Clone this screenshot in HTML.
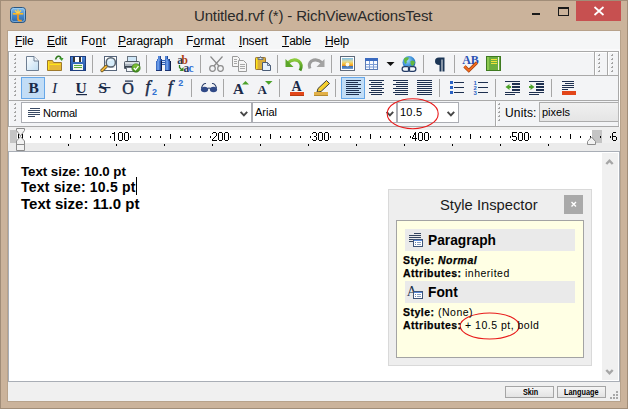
<!DOCTYPE html><html><head><meta charset="utf-8"><style>
*{margin:0;padding:0;box-sizing:border-box}
html,body{width:628px;height:409px;overflow:hidden}
body{position:relative;background:#CBB39B;font-family:"Liberation Sans",sans-serif;color:#000}
.a{position:absolute}
.t{position:absolute;white-space:pre;line-height:1}
svg.full{position:absolute;left:0;top:0}
.menu{position:absolute;font-size:12px;letter-spacing:-0.2px;color:#000;white-space:pre;line-height:1}
.menu u{text-decoration:none;position:relative}
.ib{-webkit-text-stroke:0.25px #000}
.menu u:after{content:"";position:absolute;left:0;right:0;bottom:1px;height:1px;background:#000}
</style></head><body>
<svg class="full" width="628" height="409" shape-rendering="crispEdges"><rect x="0" y="0" width="628" height="1" fill="#A18D78" /><rect x="0" y="0" width="1" height="409" fill="#A18D78" /><rect x="627" y="0" width="1" height="409" fill="#A18D78" /><rect x="0" y="408" width="628" height="1" fill="#A18D78" /><rect x="7" y="30" width="614" height="1" fill="#B7A28B" /><rect x="7" y="30" width="1" height="372" fill="#B7A28B" /><rect x="620" y="30" width="1" height="372" fill="#B7A28B" /><rect x="7" y="401" width="614" height="1" fill="#B7A28B" /><rect x="8" y="31" width="612" height="370" fill="#F0F0F0" /><rect x="8" y="31" width="612" height="20" fill="#F5F6F7" /><rect x="8" y="49" width="612" height="2" fill="#FAFAFB" /><rect x="8" y="51" width="611" height="75" fill="#F3F4F6" /><rect x="8" y="51" width="611" height="1" fill="#A9A9A9" /><rect x="8" y="52" width="611" height="1" fill="#FFFFFF" /><rect x="8" y="51" width="1" height="76" fill="#A9A9A9" /><rect x="9" y="52" width="1" height="74" fill="#FFFFFF" /><rect x="618" y="51" width="1" height="76" fill="#A9A9A9" /><rect x="619" y="51" width="1" height="76" fill="#FFFFFF" /><rect x="9" y="75" width="609" height="1" fill="#A9A9A9" /><rect x="9" y="100" width="609" height="1" fill="#A9A9A9" /><rect x="9" y="126" width="609" height="1" fill="#A9A9A9" /><rect x="594" y="51" width="1" height="25" fill="#A9A9A9" /><rect x="607" y="51" width="1" height="25" fill="#A9A9A9" /><rect x="595" y="52" width="1" height="23" fill="#FFFFFF" /><rect x="608" y="52" width="1" height="23" fill="#FFFFFF" /><rect x="495" y="100" width="1" height="26" fill="#A9A9A9" /><rect x="496" y="101" width="1" height="25" fill="#FFFFFF" /><rect x="8" y="127" width="612" height="24" fill="#EFEFEF" /><rect x="17" y="130" width="575" height="13" fill="#FFFFFF" /><rect x="8" y="143" width="612" height="8" fill="#EBEBEB" /><rect x="10" y="130" width="7" height="13" fill="#C4C4C4" /><rect x="592" y="130" width="10" height="13" fill="#C4C4C4" /><rect x="8" y="151" width="612" height="1" fill="#A9AEB6" /><rect x="8" y="152" width="612" height="229" fill="#FFFFFF" /><rect x="8" y="151" width="1" height="231" fill="#A9AEB6" /><rect x="619" y="151" width="1" height="231" fill="#A9AEB6" /><rect x="8" y="381" width="612" height="1" fill="#A9AEB6" /><rect x="602" y="153" width="16" height="227" fill="#F0F0F0" /><rect x="8" y="382" width="612" height="19" fill="#F0F0F0" /><rect x="21" y="102" width="231" height="21" fill="#ABADB3" /><rect x="22" y="103" width="229" height="19" fill="#FFFFFF" /><rect x="252" y="102" width="145" height="21" fill="#ABADB3" /><rect x="253" y="103" width="143" height="19" fill="#FFFFFF" /><rect x="397" y="102" width="62" height="21" fill="#ABADB3" /><rect x="398" y="103" width="60" height="19" fill="#FFFFFF" /><rect x="539" y="102" width="80" height="20" fill="#ACACAC" /><defs><linearGradient id="cg" x1="0" y1="0" x2="0" y2="1"><stop offset="0" stop-color="#F0F0F0"/><stop offset="1" stop-color="#E5E5E5"/></linearGradient><linearGradient id="bg" x1="0" y1="0" x2="0" y2="1"><stop offset="0" stop-color="#F5F5F5"/><stop offset="1" stop-color="#E3E3E3"/></linearGradient></defs><rect x="540" y="103" width="78" height="18" fill="url(#cg)" /><rect x="618" y="101" width="1" height="25" fill="#B8B8B8" /><rect x="21" y="77" width="24" height="22" fill="#66A7E8" /><rect x="22" y="78" width="22" height="20" fill="#C2DDF6" /><rect x="341" y="77" width="24" height="22" fill="#66A7E8" /><rect x="342" y="78" width="22" height="20" fill="#C2DDF6" /><rect x="388" y="189" width="204" height="177" fill="#D9D9D9" /><rect x="389" y="190" width="202" height="175" fill="#EEEEEE" /><rect x="564" y="195" width="19" height="19" fill="#A9A9A9" /><rect x="396" y="220" width="188" height="138" fill="#A3A3A3" /><rect x="397" y="221" width="186" height="136" fill="#FFFFE4" /><rect x="405" y="229" width="170" height="22" fill="#EAEAEA" /><rect x="405" y="281" width="170" height="22" fill="#EAEAEA" /><rect x="505" y="386" width="49" height="12" fill="#A5A5A5" /><rect x="506" y="387" width="47" height="10" fill="url(#bg)" /><rect x="557" y="386" width="49" height="12" fill="#A5A5A5" /><rect x="558" y="387" width="47" height="10" fill="url(#bg)" /><rect x="616" y="391" width="2" height="2" fill="#A8A8A8" /><rect x="613" y="394" width="2" height="2" fill="#A8A8A8" /><rect x="616" y="394" width="2" height="2" fill="#A8A8A8" /><rect x="610" y="397" width="2" height="2" fill="#A8A8A8" /><rect x="613" y="397" width="2" height="2" fill="#A8A8A8" /><rect x="616" y="397" width="2" height="2" fill="#A8A8A8" /><rect x="30" y="136" width="1" height="2" fill="#000" /><rect x="40" y="136" width="1" height="2" fill="#000" /><rect x="50" y="136" width="1" height="2" fill="#000" /><rect x="60" y="136" width="1" height="2" fill="#000" /><rect x="70" y="134" width="1" height="5" fill="#000" /><rect x="80" y="136" width="1" height="2" fill="#000" /><rect x="90" y="136" width="1" height="2" fill="#000" /><rect x="100" y="136" width="1" height="2" fill="#000" /><rect x="110" y="136" width="1" height="2" fill="#000" /><rect x="130" y="136" width="1" height="2" fill="#000" /><rect x="140" y="136" width="1" height="2" fill="#000" /><rect x="150" y="136" width="1" height="2" fill="#000" /><rect x="160" y="136" width="1" height="2" fill="#000" /><rect x="170" y="134" width="1" height="5" fill="#000" /><rect x="180" y="136" width="1" height="2" fill="#000" /><rect x="190" y="136" width="1" height="2" fill="#000" /><rect x="200" y="136" width="1" height="2" fill="#000" /><rect x="210" y="136" width="1" height="2" fill="#000" /><rect x="230" y="136" width="1" height="2" fill="#000" /><rect x="240" y="136" width="1" height="2" fill="#000" /><rect x="250" y="136" width="1" height="2" fill="#000" /><rect x="260" y="136" width="1" height="2" fill="#000" /><rect x="270" y="134" width="1" height="5" fill="#000" /><rect x="280" y="136" width="1" height="2" fill="#000" /><rect x="290" y="136" width="1" height="2" fill="#000" /><rect x="300" y="136" width="1" height="2" fill="#000" /><rect x="310" y="136" width="1" height="2" fill="#000" /><rect x="330" y="136" width="1" height="2" fill="#000" /><rect x="340" y="136" width="1" height="2" fill="#000" /><rect x="350" y="136" width="1" height="2" fill="#000" /><rect x="360" y="136" width="1" height="2" fill="#000" /><rect x="370" y="134" width="1" height="5" fill="#000" /><rect x="380" y="136" width="1" height="2" fill="#000" /><rect x="390" y="136" width="1" height="2" fill="#000" /><rect x="400" y="136" width="1" height="2" fill="#000" /><rect x="410" y="136" width="1" height="2" fill="#000" /><rect x="430" y="136" width="1" height="2" fill="#000" /><rect x="440" y="136" width="1" height="2" fill="#000" /><rect x="450" y="136" width="1" height="2" fill="#000" /><rect x="460" y="136" width="1" height="2" fill="#000" /><rect x="470" y="134" width="1" height="5" fill="#000" /><rect x="480" y="136" width="1" height="2" fill="#000" /><rect x="490" y="136" width="1" height="2" fill="#000" /><rect x="500" y="136" width="1" height="2" fill="#000" /><rect x="510" y="136" width="1" height="2" fill="#000" /><rect x="530" y="136" width="1" height="2" fill="#000" /><rect x="540" y="136" width="1" height="2" fill="#000" /><rect x="550" y="136" width="1" height="2" fill="#000" /><rect x="560" y="136" width="1" height="2" fill="#000" /><rect x="570" y="134" width="1" height="5" fill="#000" /><rect x="580" y="136" width="1" height="2" fill="#000" /><rect x="590" y="136" width="1" height="2" fill="#000" /><rect x="600" y="136" width="1" height="2" fill="#000" /><rect x="610" y="136" width="1" height="2" fill="#000" /><rect x="18" y="134" width="1" height="5" fill="#000" /><rect x="22" y="134" width="1" height="5" fill="#000" /><rect x="114" y="132" width="1" height="1" fill="#000" /><rect x="112" y="133" width="1" height="1" fill="#000" /><rect x="113" y="133" width="1" height="1" fill="#000" /><rect x="114" y="133" width="1" height="1" fill="#000" /><rect x="114" y="134" width="1" height="1" fill="#000" /><rect x="114" y="135" width="1" height="1" fill="#000" /><rect x="114" y="136" width="1" height="1" fill="#000" /><rect x="114" y="137" width="1" height="1" fill="#000" /><rect x="114" y="138" width="1" height="1" fill="#000" /><rect x="114" y="139" width="1" height="1" fill="#000" /><rect x="114" y="140" width="1" height="1" fill="#000" /><rect x="119" y="132" width="1" height="1" fill="#000" /><rect x="120" y="132" width="1" height="1" fill="#000" /><rect x="121" y="132" width="1" height="1" fill="#000" /><rect x="118" y="133" width="1" height="1" fill="#000" /><rect x="122" y="133" width="1" height="1" fill="#000" /><rect x="118" y="134" width="1" height="1" fill="#000" /><rect x="122" y="134" width="1" height="1" fill="#000" /><rect x="118" y="135" width="1" height="1" fill="#000" /><rect x="122" y="135" width="1" height="1" fill="#000" /><rect x="118" y="136" width="1" height="1" fill="#000" /><rect x="122" y="136" width="1" height="1" fill="#000" /><rect x="118" y="137" width="1" height="1" fill="#000" /><rect x="122" y="137" width="1" height="1" fill="#000" /><rect x="118" y="138" width="1" height="1" fill="#000" /><rect x="122" y="138" width="1" height="1" fill="#000" /><rect x="118" y="139" width="1" height="1" fill="#000" /><rect x="122" y="139" width="1" height="1" fill="#000" /><rect x="119" y="140" width="1" height="1" fill="#000" /><rect x="120" y="140" width="1" height="1" fill="#000" /><rect x="121" y="140" width="1" height="1" fill="#000" /><rect x="125" y="132" width="1" height="1" fill="#000" /><rect x="126" y="132" width="1" height="1" fill="#000" /><rect x="127" y="132" width="1" height="1" fill="#000" /><rect x="124" y="133" width="1" height="1" fill="#000" /><rect x="128" y="133" width="1" height="1" fill="#000" /><rect x="124" y="134" width="1" height="1" fill="#000" /><rect x="128" y="134" width="1" height="1" fill="#000" /><rect x="124" y="135" width="1" height="1" fill="#000" /><rect x="128" y="135" width="1" height="1" fill="#000" /><rect x="124" y="136" width="1" height="1" fill="#000" /><rect x="128" y="136" width="1" height="1" fill="#000" /><rect x="124" y="137" width="1" height="1" fill="#000" /><rect x="128" y="137" width="1" height="1" fill="#000" /><rect x="124" y="138" width="1" height="1" fill="#000" /><rect x="128" y="138" width="1" height="1" fill="#000" /><rect x="124" y="139" width="1" height="1" fill="#000" /><rect x="128" y="139" width="1" height="1" fill="#000" /><rect x="125" y="140" width="1" height="1" fill="#000" /><rect x="126" y="140" width="1" height="1" fill="#000" /><rect x="127" y="140" width="1" height="1" fill="#000" /><rect x="213" y="132" width="1" height="1" fill="#000" /><rect x="214" y="132" width="1" height="1" fill="#000" /><rect x="215" y="132" width="1" height="1" fill="#000" /><rect x="212" y="133" width="1" height="1" fill="#000" /><rect x="216" y="133" width="1" height="1" fill="#000" /><rect x="216" y="134" width="1" height="1" fill="#000" /><rect x="216" y="135" width="1" height="1" fill="#000" /><rect x="215" y="136" width="1" height="1" fill="#000" /><rect x="214" y="137" width="1" height="1" fill="#000" /><rect x="213" y="138" width="1" height="1" fill="#000" /><rect x="212" y="139" width="1" height="1" fill="#000" /><rect x="212" y="140" width="1" height="1" fill="#000" /><rect x="213" y="140" width="1" height="1" fill="#000" /><rect x="214" y="140" width="1" height="1" fill="#000" /><rect x="215" y="140" width="1" height="1" fill="#000" /><rect x="216" y="140" width="1" height="1" fill="#000" /><rect x="219" y="132" width="1" height="1" fill="#000" /><rect x="220" y="132" width="1" height="1" fill="#000" /><rect x="221" y="132" width="1" height="1" fill="#000" /><rect x="218" y="133" width="1" height="1" fill="#000" /><rect x="222" y="133" width="1" height="1" fill="#000" /><rect x="218" y="134" width="1" height="1" fill="#000" /><rect x="222" y="134" width="1" height="1" fill="#000" /><rect x="218" y="135" width="1" height="1" fill="#000" /><rect x="222" y="135" width="1" height="1" fill="#000" /><rect x="218" y="136" width="1" height="1" fill="#000" /><rect x="222" y="136" width="1" height="1" fill="#000" /><rect x="218" y="137" width="1" height="1" fill="#000" /><rect x="222" y="137" width="1" height="1" fill="#000" /><rect x="218" y="138" width="1" height="1" fill="#000" /><rect x="222" y="138" width="1" height="1" fill="#000" /><rect x="218" y="139" width="1" height="1" fill="#000" /><rect x="222" y="139" width="1" height="1" fill="#000" /><rect x="219" y="140" width="1" height="1" fill="#000" /><rect x="220" y="140" width="1" height="1" fill="#000" /><rect x="221" y="140" width="1" height="1" fill="#000" /><rect x="225" y="132" width="1" height="1" fill="#000" /><rect x="226" y="132" width="1" height="1" fill="#000" /><rect x="227" y="132" width="1" height="1" fill="#000" /><rect x="224" y="133" width="1" height="1" fill="#000" /><rect x="228" y="133" width="1" height="1" fill="#000" /><rect x="224" y="134" width="1" height="1" fill="#000" /><rect x="228" y="134" width="1" height="1" fill="#000" /><rect x="224" y="135" width="1" height="1" fill="#000" /><rect x="228" y="135" width="1" height="1" fill="#000" /><rect x="224" y="136" width="1" height="1" fill="#000" /><rect x="228" y="136" width="1" height="1" fill="#000" /><rect x="224" y="137" width="1" height="1" fill="#000" /><rect x="228" y="137" width="1" height="1" fill="#000" /><rect x="224" y="138" width="1" height="1" fill="#000" /><rect x="228" y="138" width="1" height="1" fill="#000" /><rect x="224" y="139" width="1" height="1" fill="#000" /><rect x="228" y="139" width="1" height="1" fill="#000" /><rect x="225" y="140" width="1" height="1" fill="#000" /><rect x="226" y="140" width="1" height="1" fill="#000" /><rect x="227" y="140" width="1" height="1" fill="#000" /><rect x="313" y="132" width="1" height="1" fill="#000" /><rect x="314" y="132" width="1" height="1" fill="#000" /><rect x="315" y="132" width="1" height="1" fill="#000" /><rect x="312" y="133" width="1" height="1" fill="#000" /><rect x="316" y="133" width="1" height="1" fill="#000" /><rect x="316" y="134" width="1" height="1" fill="#000" /><rect x="316" y="135" width="1" height="1" fill="#000" /><rect x="314" y="136" width="1" height="1" fill="#000" /><rect x="315" y="136" width="1" height="1" fill="#000" /><rect x="316" y="137" width="1" height="1" fill="#000" /><rect x="316" y="138" width="1" height="1" fill="#000" /><rect x="312" y="139" width="1" height="1" fill="#000" /><rect x="316" y="139" width="1" height="1" fill="#000" /><rect x="313" y="140" width="1" height="1" fill="#000" /><rect x="314" y="140" width="1" height="1" fill="#000" /><rect x="315" y="140" width="1" height="1" fill="#000" /><rect x="319" y="132" width="1" height="1" fill="#000" /><rect x="320" y="132" width="1" height="1" fill="#000" /><rect x="321" y="132" width="1" height="1" fill="#000" /><rect x="318" y="133" width="1" height="1" fill="#000" /><rect x="322" y="133" width="1" height="1" fill="#000" /><rect x="318" y="134" width="1" height="1" fill="#000" /><rect x="322" y="134" width="1" height="1" fill="#000" /><rect x="318" y="135" width="1" height="1" fill="#000" /><rect x="322" y="135" width="1" height="1" fill="#000" /><rect x="318" y="136" width="1" height="1" fill="#000" /><rect x="322" y="136" width="1" height="1" fill="#000" /><rect x="318" y="137" width="1" height="1" fill="#000" /><rect x="322" y="137" width="1" height="1" fill="#000" /><rect x="318" y="138" width="1" height="1" fill="#000" /><rect x="322" y="138" width="1" height="1" fill="#000" /><rect x="318" y="139" width="1" height="1" fill="#000" /><rect x="322" y="139" width="1" height="1" fill="#000" /><rect x="319" y="140" width="1" height="1" fill="#000" /><rect x="320" y="140" width="1" height="1" fill="#000" /><rect x="321" y="140" width="1" height="1" fill="#000" /><rect x="325" y="132" width="1" height="1" fill="#000" /><rect x="326" y="132" width="1" height="1" fill="#000" /><rect x="327" y="132" width="1" height="1" fill="#000" /><rect x="324" y="133" width="1" height="1" fill="#000" /><rect x="328" y="133" width="1" height="1" fill="#000" /><rect x="324" y="134" width="1" height="1" fill="#000" /><rect x="328" y="134" width="1" height="1" fill="#000" /><rect x="324" y="135" width="1" height="1" fill="#000" /><rect x="328" y="135" width="1" height="1" fill="#000" /><rect x="324" y="136" width="1" height="1" fill="#000" /><rect x="328" y="136" width="1" height="1" fill="#000" /><rect x="324" y="137" width="1" height="1" fill="#000" /><rect x="328" y="137" width="1" height="1" fill="#000" /><rect x="324" y="138" width="1" height="1" fill="#000" /><rect x="328" y="138" width="1" height="1" fill="#000" /><rect x="324" y="139" width="1" height="1" fill="#000" /><rect x="328" y="139" width="1" height="1" fill="#000" /><rect x="325" y="140" width="1" height="1" fill="#000" /><rect x="326" y="140" width="1" height="1" fill="#000" /><rect x="327" y="140" width="1" height="1" fill="#000" /><rect x="415" y="132" width="1" height="1" fill="#000" /><rect x="414" y="133" width="1" height="1" fill="#000" /><rect x="415" y="133" width="1" height="1" fill="#000" /><rect x="414" y="134" width="1" height="1" fill="#000" /><rect x="415" y="134" width="1" height="1" fill="#000" /><rect x="413" y="135" width="1" height="1" fill="#000" /><rect x="415" y="135" width="1" height="1" fill="#000" /><rect x="413" y="136" width="1" height="1" fill="#000" /><rect x="415" y="136" width="1" height="1" fill="#000" /><rect x="412" y="137" width="1" height="1" fill="#000" /><rect x="415" y="137" width="1" height="1" fill="#000" /><rect x="412" y="138" width="1" height="1" fill="#000" /><rect x="413" y="138" width="1" height="1" fill="#000" /><rect x="414" y="138" width="1" height="1" fill="#000" /><rect x="415" y="138" width="1" height="1" fill="#000" /><rect x="416" y="138" width="1" height="1" fill="#000" /><rect x="415" y="139" width="1" height="1" fill="#000" /><rect x="415" y="140" width="1" height="1" fill="#000" /><rect x="419" y="132" width="1" height="1" fill="#000" /><rect x="420" y="132" width="1" height="1" fill="#000" /><rect x="421" y="132" width="1" height="1" fill="#000" /><rect x="418" y="133" width="1" height="1" fill="#000" /><rect x="422" y="133" width="1" height="1" fill="#000" /><rect x="418" y="134" width="1" height="1" fill="#000" /><rect x="422" y="134" width="1" height="1" fill="#000" /><rect x="418" y="135" width="1" height="1" fill="#000" /><rect x="422" y="135" width="1" height="1" fill="#000" /><rect x="418" y="136" width="1" height="1" fill="#000" /><rect x="422" y="136" width="1" height="1" fill="#000" /><rect x="418" y="137" width="1" height="1" fill="#000" /><rect x="422" y="137" width="1" height="1" fill="#000" /><rect x="418" y="138" width="1" height="1" fill="#000" /><rect x="422" y="138" width="1" height="1" fill="#000" /><rect x="418" y="139" width="1" height="1" fill="#000" /><rect x="422" y="139" width="1" height="1" fill="#000" /><rect x="419" y="140" width="1" height="1" fill="#000" /><rect x="420" y="140" width="1" height="1" fill="#000" /><rect x="421" y="140" width="1" height="1" fill="#000" /><rect x="425" y="132" width="1" height="1" fill="#000" /><rect x="426" y="132" width="1" height="1" fill="#000" /><rect x="427" y="132" width="1" height="1" fill="#000" /><rect x="424" y="133" width="1" height="1" fill="#000" /><rect x="428" y="133" width="1" height="1" fill="#000" /><rect x="424" y="134" width="1" height="1" fill="#000" /><rect x="428" y="134" width="1" height="1" fill="#000" /><rect x="424" y="135" width="1" height="1" fill="#000" /><rect x="428" y="135" width="1" height="1" fill="#000" /><rect x="424" y="136" width="1" height="1" fill="#000" /><rect x="428" y="136" width="1" height="1" fill="#000" /><rect x="424" y="137" width="1" height="1" fill="#000" /><rect x="428" y="137" width="1" height="1" fill="#000" /><rect x="424" y="138" width="1" height="1" fill="#000" /><rect x="428" y="138" width="1" height="1" fill="#000" /><rect x="424" y="139" width="1" height="1" fill="#000" /><rect x="428" y="139" width="1" height="1" fill="#000" /><rect x="425" y="140" width="1" height="1" fill="#000" /><rect x="426" y="140" width="1" height="1" fill="#000" /><rect x="427" y="140" width="1" height="1" fill="#000" /><rect x="512" y="132" width="1" height="1" fill="#000" /><rect x="513" y="132" width="1" height="1" fill="#000" /><rect x="514" y="132" width="1" height="1" fill="#000" /><rect x="515" y="132" width="1" height="1" fill="#000" /><rect x="516" y="132" width="1" height="1" fill="#000" /><rect x="512" y="133" width="1" height="1" fill="#000" /><rect x="512" y="134" width="1" height="1" fill="#000" /><rect x="512" y="135" width="1" height="1" fill="#000" /><rect x="512" y="136" width="1" height="1" fill="#000" /><rect x="513" y="136" width="1" height="1" fill="#000" /><rect x="514" y="136" width="1" height="1" fill="#000" /><rect x="515" y="136" width="1" height="1" fill="#000" /><rect x="516" y="137" width="1" height="1" fill="#000" /><rect x="516" y="138" width="1" height="1" fill="#000" /><rect x="512" y="139" width="1" height="1" fill="#000" /><rect x="516" y="139" width="1" height="1" fill="#000" /><rect x="513" y="140" width="1" height="1" fill="#000" /><rect x="514" y="140" width="1" height="1" fill="#000" /><rect x="515" y="140" width="1" height="1" fill="#000" /><rect x="519" y="132" width="1" height="1" fill="#000" /><rect x="520" y="132" width="1" height="1" fill="#000" /><rect x="521" y="132" width="1" height="1" fill="#000" /><rect x="518" y="133" width="1" height="1" fill="#000" /><rect x="522" y="133" width="1" height="1" fill="#000" /><rect x="518" y="134" width="1" height="1" fill="#000" /><rect x="522" y="134" width="1" height="1" fill="#000" /><rect x="518" y="135" width="1" height="1" fill="#000" /><rect x="522" y="135" width="1" height="1" fill="#000" /><rect x="518" y="136" width="1" height="1" fill="#000" /><rect x="522" y="136" width="1" height="1" fill="#000" /><rect x="518" y="137" width="1" height="1" fill="#000" /><rect x="522" y="137" width="1" height="1" fill="#000" /><rect x="518" y="138" width="1" height="1" fill="#000" /><rect x="522" y="138" width="1" height="1" fill="#000" /><rect x="518" y="139" width="1" height="1" fill="#000" /><rect x="522" y="139" width="1" height="1" fill="#000" /><rect x="519" y="140" width="1" height="1" fill="#000" /><rect x="520" y="140" width="1" height="1" fill="#000" /><rect x="521" y="140" width="1" height="1" fill="#000" /><rect x="525" y="132" width="1" height="1" fill="#000" /><rect x="526" y="132" width="1" height="1" fill="#000" /><rect x="527" y="132" width="1" height="1" fill="#000" /><rect x="524" y="133" width="1" height="1" fill="#000" /><rect x="528" y="133" width="1" height="1" fill="#000" /><rect x="524" y="134" width="1" height="1" fill="#000" /><rect x="528" y="134" width="1" height="1" fill="#000" /><rect x="524" y="135" width="1" height="1" fill="#000" /><rect x="528" y="135" width="1" height="1" fill="#000" /><rect x="524" y="136" width="1" height="1" fill="#000" /><rect x="528" y="136" width="1" height="1" fill="#000" /><rect x="524" y="137" width="1" height="1" fill="#000" /><rect x="528" y="137" width="1" height="1" fill="#000" /><rect x="524" y="138" width="1" height="1" fill="#000" /><rect x="528" y="138" width="1" height="1" fill="#000" /><rect x="524" y="139" width="1" height="1" fill="#000" /><rect x="528" y="139" width="1" height="1" fill="#000" /><rect x="525" y="140" width="1" height="1" fill="#000" /><rect x="526" y="140" width="1" height="1" fill="#000" /><rect x="527" y="140" width="1" height="1" fill="#000" /><rect x="613" y="132" width="1" height="1" fill="#000" /><rect x="614" y="132" width="1" height="1" fill="#000" /><rect x="615" y="132" width="1" height="1" fill="#000" /><rect x="612" y="133" width="1" height="1" fill="#000" /><rect x="612" y="134" width="1" height="1" fill="#000" /><rect x="612" y="135" width="1" height="1" fill="#000" /><rect x="612" y="136" width="1" height="1" fill="#000" /><rect x="613" y="136" width="1" height="1" fill="#000" /><rect x="614" y="136" width="1" height="1" fill="#000" /><rect x="615" y="136" width="1" height="1" fill="#000" /><rect x="612" y="137" width="1" height="1" fill="#000" /><rect x="616" y="137" width="1" height="1" fill="#000" /><rect x="612" y="138" width="1" height="1" fill="#000" /><rect x="616" y="138" width="1" height="1" fill="#000" /><rect x="612" y="139" width="1" height="1" fill="#000" /><rect x="616" y="139" width="1" height="1" fill="#000" /><rect x="613" y="140" width="1" height="1" fill="#000" /><rect x="614" y="140" width="1" height="1" fill="#000" /><rect x="615" y="140" width="1" height="1" fill="#000" /><rect x="68" y="144" width="1" height="2" fill="#000" /><rect x="116" y="144" width="1" height="2" fill="#000" /><rect x="164" y="144" width="1" height="2" fill="#000" /><rect x="212" y="144" width="1" height="2" fill="#000" /><rect x="260" y="144" width="1" height="2" fill="#000" /><rect x="308" y="144" width="1" height="2" fill="#000" /><rect x="356" y="144" width="1" height="2" fill="#000" /><rect x="404" y="144" width="1" height="2" fill="#000" /><rect x="452" y="144" width="1" height="2" fill="#000" /><rect x="500" y="144" width="1" height="2" fill="#000" /><rect x="548" y="144" width="1" height="2" fill="#000" /></svg>
<svg class="full" width="628" height="409"><defs>
<linearGradient id="docg" x1="0" y1="0" x2="1" y2="1"><stop offset="0" stop-color="#FFFFFF"/><stop offset="1" stop-color="#BFDDF2"/></linearGradient>
<linearGradient id="blueg" x1="0" y1="0" x2="0" y2="1"><stop offset="0" stop-color="#4C86D6"/><stop offset="1" stop-color="#1D4C9E"/></linearGradient>
<linearGradient id="sunset" x1="0" y1="0" x2="0" y2="1"><stop offset="0" stop-color="#7EBEEA"/><stop offset="0.3" stop-color="#DCDCA0"/><stop offset="0.5" stop-color="#F8C848"/><stop offset="0.68" stop-color="#EC9A22"/><stop offset="0.76" stop-color="#3F6FB0"/><stop offset="1" stop-color="#6E9ED4"/></linearGradient>
<linearGradient id="greeng" x1="0" y1="0" x2="0" y2="1"><stop offset="0" stop-color="#8CCB3C"/><stop offset="1" stop-color="#3D8A1C"/></linearGradient>
<radialGradient id="globeg" cx="0.4" cy="0.35" r="0.7"><stop offset="0" stop-color="#9FD8F8"/><stop offset="0.6" stop-color="#3A8ED8"/><stop offset="1" stop-color="#1F5FA8"/></radialGradient>
</defs>
<!-- grips -->
<g fill="#A4A4A4" shape-rendering="crispEdges"><rect x="15" y="54" width="1" height="2"/><rect x="14" y="55" width="1" height="1"/><rect x="15" y="58" width="1" height="2"/><rect x="14" y="59" width="1" height="1"/><rect x="15" y="62" width="1" height="2"/><rect x="14" y="63" width="1" height="1"/><rect x="15" y="66" width="1" height="2"/><rect x="14" y="67" width="1" height="1"/><rect x="15" y="70" width="1" height="2"/><rect x="14" y="71" width="1" height="1"/><rect x="15" y="78" width="1" height="2"/><rect x="14" y="79" width="1" height="1"/><rect x="15" y="82" width="1" height="2"/><rect x="14" y="83" width="1" height="1"/><rect x="15" y="86" width="1" height="2"/><rect x="14" y="87" width="1" height="1"/><rect x="15" y="90" width="1" height="2"/><rect x="14" y="91" width="1" height="1"/><rect x="15" y="94" width="1" height="2"/><rect x="14" y="95" width="1" height="1"/><rect x="15" y="103" width="1" height="2"/><rect x="14" y="104" width="1" height="1"/><rect x="15" y="107" width="1" height="2"/><rect x="14" y="108" width="1" height="1"/><rect x="15" y="111" width="1" height="2"/><rect x="14" y="112" width="1" height="1"/><rect x="15" y="115" width="1" height="2"/><rect x="14" y="116" width="1" height="1"/><rect x="15" y="119" width="1" height="2"/><rect x="14" y="120" width="1" height="1"/><rect x="599" y="54" width="1" height="2"/><rect x="598" y="55" width="1" height="1"/><rect x="599" y="58" width="1" height="2"/><rect x="598" y="59" width="1" height="1"/><rect x="599" y="62" width="1" height="2"/><rect x="598" y="63" width="1" height="1"/><rect x="599" y="66" width="1" height="2"/><rect x="598" y="67" width="1" height="1"/><rect x="599" y="70" width="1" height="2"/><rect x="598" y="71" width="1" height="1"/><rect x="612" y="54" width="1" height="2"/><rect x="611" y="55" width="1" height="1"/><rect x="612" y="58" width="1" height="2"/><rect x="611" y="59" width="1" height="1"/><rect x="612" y="62" width="1" height="2"/><rect x="611" y="63" width="1" height="1"/><rect x="612" y="66" width="1" height="2"/><rect x="611" y="67" width="1" height="1"/><rect x="612" y="70" width="1" height="2"/><rect x="611" y="71" width="1" height="1"/><rect x="499" y="103" width="1" height="2"/><rect x="498" y="104" width="1" height="1"/><rect x="499" y="107" width="1" height="2"/><rect x="498" y="108" width="1" height="1"/><rect x="499" y="111" width="1" height="2"/><rect x="498" y="112" width="1" height="1"/><rect x="499" y="115" width="1" height="2"/><rect x="498" y="116" width="1" height="1"/><rect x="499" y="119" width="1" height="2"/><rect x="498" y="120" width="1" height="1"/></g>
<!-- separators -->
<g fill="#A6A6A6" shape-rendering="crispEdges">
<rect x="92" y="55" width="1" height="18"/><rect x="146" y="55" width="1" height="18"/><rect x="200" y="55" width="1" height="18"/><rect x="277" y="55" width="1" height="18"/><rect x="331" y="55" width="1" height="18"/><rect x="423" y="55" width="1" height="18"/><rect x="454" y="55" width="1" height="18"/>
<rect x="191" y="79" width="1" height="18"/><rect x="223" y="79" width="1" height="18"/><rect x="279" y="79" width="1" height="18"/><rect x="335" y="79" width="1" height="18"/><rect x="439" y="79" width="1" height="18"/><rect x="495" y="79" width="1" height="18"/><rect x="551" y="79" width="1" height="18"/>
</g>
<!-- new -->
<path d="M26.5 56.5H34L38.5 61V70.5H26.5Z" fill="url(#docg)" stroke="#6E7E92"/>
<path d="M34 56.5V61H38.5" fill="#F4F8FC" stroke="#6E7E92"/>
<!-- open -->
<path d="M47.5 60.5H52.5L53.5 62.5H61.5V70.5H47.5Z" fill="#EDC232" stroke="#9E7A2C"/>
<path d="M48.5 61.5V69.5M49.5 64.5H60.5" stroke="#FFE418" stroke-width="1"/>
<rect x="50" y="65" width="11" height="5" fill="#E6B838"/>
<path d="M55.5 59.5Q56.5 55.8 59 56.2Q60.5 56.5 61 58" stroke="#2F7A1E" stroke-width="1.5" fill="none"/>
<path d="M59 58H63.5L61.8 61Z" fill="#3E9B2E"/>
<!-- save -->
<rect x="70.5" y="56.5" width="15" height="14" fill="url(#blueg)" stroke="#1E3E7E"/>
<rect x="73" y="57" width="9" height="5" fill="#FFFFFF"/><rect x="73" y="57" width="2" height="5" fill="#333"/><rect x="79" y="57" width="2" height="5" fill="#333"/>
<rect x="73" y="64" width="10" height="6" fill="#F2F6EE"/><rect x="74" y="65" width="8" height="1" fill="#5AAA3A"/><rect x="74" y="67" width="8" height="1" fill="#5AAA3A"/>
<!-- preview -->
<rect x="104.5" y="56.5" width="12" height="14" fill="#FFFFFF" stroke="#56657A"/>
<path d="M106.5 59.5H114.5M106.5 67.5H114.5" stroke="#D0D8E0"/>
<circle cx="110.8" cy="62.4" r="4.6" fill="#D6ECFA" stroke="#5A6470" stroke-width="1.5"/>
<path d="M108.5 60.5Q110 59.5 111.5 60" stroke="#FFFFFF" stroke-width="1" fill="none"/>
<path d="M102 70.5L106 66.5" stroke="#5A4A20" stroke-width="3.2" stroke-linecap="round"/>
<path d="M102 70.5L106 66.5" stroke="#F2B838" stroke-width="1.8" stroke-linecap="round"/>
<!-- print -->
<rect x="127.5" y="56.5" width="9" height="5" fill="#CFE7F8" stroke="#6A7480"/>
<path d="M124.5 62.5Q124.5 61.5 125.5 61.5H138.5Q139.5 61.5 139.5 62.5V68.5H124.5Z" fill="#A8B2BC" stroke="#4E5864"/>
<rect x="125" y="62" width="14" height="2" fill="#D8DEE4"/>
<rect x="125" y="66" width="14" height="2" fill="#38424E"/>
<rect x="126.5" y="67.5" width="11" height="4" fill="#F4F7FA" stroke="#6A7480"/>
<circle cx="136" cy="68" r="4.2" fill="url(#greeng)" stroke="#2E6A14" stroke-width="0.6"/>
<path d="M133.8 68L135.5 69.8L138.5 66.2" stroke="#fff" stroke-width="1.3" fill="none"/>
<!-- binoculars -->
<defs><linearGradient id="binog" x1="0" y1="0" x2="1" y2="0"><stop offset="0" stop-color="#2A5CB8"/><stop offset="0.35" stop-color="#7AAAF0"/><stop offset="0.6" stop-color="#3D72D0"/><stop offset="1" stop-color="#142C66"/></linearGradient></defs>
<g shape-rendering="crispEdges">
<rect x="158" y="56" width="3" height="4" fill="url(#binog)"/><rect x="157" y="59" width="5" height="2" fill="url(#binog)"/><rect x="156" y="61" width="6" height="10" fill="url(#binog)"/>
<rect x="165" y="56" width="3" height="4" fill="url(#binog)"/><rect x="165" y="59" width="5" height="2" fill="url(#binog)"/><rect x="165" y="61" width="6" height="10" fill="url(#binog)"/>
<rect x="162" y="60" width="3" height="5" fill="#2F5FB4"/><rect x="162" y="61" width="3" height="1" fill="#CFE0FA"/><rect x="162" y="63" width="3" height="1" fill="#CFE0FA"/>
<rect x="161" y="61" width="1" height="10" fill="#0E1E48"/><rect x="170" y="61" width="1" height="10" fill="#0E1E48"/>
<rect x="156" y="70" width="6" height="1" fill="#1A3270"/><rect x="165" y="70" width="6" height="1" fill="#1A3270"/>
</g>
<!-- replace -->
<g font-family="Liberation Serif" font-size="11.5" font-weight="bold">
<text x="177.3" y="63.6" fill="#25365C">a</text>
<text x="181.6" y="63.6" fill="#B0400E">b</text>
<text x="183.6" y="71.6" fill="#25365C">a</text>
<text x="188.4" y="71.6" fill="#2E6ED6">c</text>
</g>
<path d="M179.5 65V67.5L182 70" stroke="#2E7A18" stroke-width="1.3" fill="none"/>
<path d="M179.5 71H183.5V67Z" fill="#3A8A22"/>
<!-- cut -->
<path d="M210.5 56.5L219 66M222.5 56.5L214 66" stroke="#8A8A8A" stroke-width="1.2" fill="none"/>
<circle cx="212.5" cy="68.5" r="2.8" fill="none" stroke="#8A8A8A" stroke-width="1.2"/>
<circle cx="220.5" cy="68.5" r="2.8" fill="none" stroke="#8A8A8A" stroke-width="1.2"/>
<!-- copy -->
<path d="M232.5 56.5H237.5L239.5 58.5V66.5H232.5Z" fill="#F6F6F6" stroke="#9A9A9A"/>
<path d="M238.5 60.5H243.5L246.5 63.5V71.5H238.5Z" fill="#F6F6F6" stroke="#9A9A9A"/>
<path d="M234 59.5H237M234 61.5H237M234 63.5H237M240 64.5H245M240 66.5H245M240 68.5H245" stroke="#A8A8A8"/>
<!-- paste -->
<rect x="255.5" y="57.5" width="10" height="12" rx="0.8" fill="#D8AE3C" stroke="#9A7430"/>
<rect x="256" y="58" width="1.5" height="11" fill="#FFE41A"/>
<path d="M258 59.5V58H259.8L260.5 56.5L261.2 58H263V59.5Z" fill="#E4ECF4" stroke="#50627A" stroke-width="0.8"/>
<path d="M262.5 62.5H267.5L270.5 65.5V70.5H262.5Z" fill="#E6F1FB" stroke="#4A5C76"/>
<path d="M267.5 62.5V65.5H270.5Z" fill="#C6D8EA" stroke="#4A5C76" stroke-width="0.8"/>
<!-- undo -->
<path d="M287.5 63Q293 58 298.5 61Q303 64.5 300 70.5" stroke="url(#greeng)" stroke-width="3" fill="none"/>
<path d="M285.5 59V67H293.5Z" fill="#5CA62A"/>
<!-- redo -->
<path d="M322.5 63Q317 58 311.5 61Q308 64 310 68.5" stroke="#9C9C9C" stroke-width="3" fill="none"/>
<path d="M324.5 59V67H316.5Z" fill="#A4A4A4"/>
<!-- picture -->
<rect x="340.5" y="56.5" width="14" height="14" fill="#FFFFFF" stroke="#5E6A7A"/>
<rect x="342" y="58" width="11" height="11" fill="url(#sunset)"/>
<circle cx="347.5" cy="64.5" r="1.9" fill="#FFFCE8"/>
<!-- table -->
<rect x="365.5" y="58.5" width="12" height="11" fill="#F8FBFF" stroke="#5A7CB6"/>
<rect x="365" y="58" width="13" height="3" fill="#3A6AC0"/>
<path d="M366 64.5H377M366 67H377M369.5 61V69M373.5 61V69" stroke="#7A9CD6" stroke-width="1"/>
<path d="M386.5 62H394.5L390.5 66Z" fill="#111"/>
<!-- globe -->
<circle cx="409" cy="62.5" r="6.5" fill="url(#globeg)"/>
<path d="M404 58.5Q406.5 56.5 409 57.5Q408.5 60 406.5 61Q407.5 63 405.5 64Q403.5 62 404 58.5Z" fill="#62B840"/>
<path d="M410.5 61Q413.5 59.5 415 62Q414.5 65 412 66Q410 64 410.5 61Z" fill="#62B840"/>
<rect x="402" y="66" width="14" height="6" rx="3" fill="#F4F8FC"/>
<rect x="402.1" y="66.6" width="7.5" height="4.8" rx="2.4" fill="none" stroke="#243C66" stroke-width="1.2"/>
<rect x="408.4" y="66.6" width="7.5" height="4.8" rx="2.4" fill="none" stroke="#243C66" stroke-width="1.2"/>
<!-- pilcrow -->
<path d="M439 57.5H444.5V71.5H442.5V59.5H441.5V71.5H439.5V65Q435 65 435 61.2Q435 57.5 439 57.5Z" fill="#1C3656"/>
<!-- AB spell -->
<text x="462.3" y="64" font-family="Liberation Serif" font-size="12" font-weight="bold" fill="#2A52B4" letter-spacing="-0.2">AB</text>
<path d="M464.5 66.3L468.8 70.6L476.8 62.6" stroke="#9A3A08" stroke-width="3.2" fill="none"/>
<path d="M464.5 66.3L468.8 70.6L476.8 62.6" stroke="#F06A1E" stroke-width="2" fill="none"/>
<!-- book -->
<g shape-rendering="crispEdges">
<rect x="486" y="56" width="15" height="15" fill="#3E7A20"/>
<rect x="487" y="57" width="13" height="13" fill="#6DAE3E"/>
<rect x="487" y="57" width="2" height="13" fill="#8CC850"/>
<rect x="498" y="57" width="1" height="13" fill="#F4F4EC"/>
<rect x="491" y="59" width="6" height="1" fill="#F2E23A"/><rect x="491" y="61" width="6" height="1" fill="#F2E23A"/><rect x="491" y="63" width="6" height="1" fill="#F2E23A"/>
</g>
<g font-family="Liberation Serif" fill="#1A2A48">
<text x="28.5" y="93" font-size="15.5" font-weight="bold">B</text>
<text x="52" y="93" font-size="15.5" font-style="italic">I</text>
<text x="75.5" y="93" font-size="15.5" font-weight="bold">U</text>
<rect x="76" y="94" width="11" height="1.2"/>
<text x="98.5" y="93" font-size="15.5" font-weight="bold">S</text>
<rect x="98.5" y="87" width="12" height="1.2"/>
<text x="122.3" y="93.5" font-size="16" stroke="#1A2A48" stroke-width="0.45">O</text>
<rect x="125" y="80.5" width="8" height="1.2"/>
<text x="145.5" y="92" font-size="17" font-style="italic" stroke="#1A2A48" stroke-width="0.5">f</text>
<text x="168" y="92" font-size="17" font-style="italic" stroke="#1A2A48" stroke-width="0.5">f</text>
<text x="233" y="93.5" font-size="15" font-weight="bold">A</text>
<text x="257.5" y="93.5" font-size="13" font-weight="bold">A</text>
<text x="291.5" y="90.5" font-size="14" font-weight="bold">A</text>
</g>
<text x="152" y="95" font-family="Liberation Sans" font-size="9" font-weight="bold" fill="#2F6FD0">2</text>
<text x="178.3" y="86" font-family="Liberation Sans" font-size="9" font-weight="bold" fill="#2F6FD0">2</text>
<!-- glasses -->
<path d="M201.5 88Q203 83 206 83.5M216.5 88Q215 83 212 83.5" stroke="#2A3F6A" stroke-width="1.1" fill="none"/>
<ellipse cx="204.5" cy="89.5" rx="3.6" ry="2.8" fill="#304A88"/>
<ellipse cx="213.5" cy="89.5" rx="3.6" ry="2.8" fill="#304A88"/>
<path d="M207.5 88.5Q209 87.5 210.5 88.5" stroke="#2A3F6A" stroke-width="1.2" fill="none"/>
<!-- grow / shrink arrows -->
<path d="M242 84.5L245.5 81L249 84.5Z" fill="#4CA22A"/>
<path d="M265 81H272.5L268.75 84.8Z" fill="#4CA22A"/>
<!-- font color bar -->
<rect x="290" y="92" width="14" height="4" fill="#E2461A"/>
<rect x="290" y="95" width="14" height="1" fill="#B83A10"/>
<!-- highlighter -->
<path d="M318 88.5L326.5 80.5L329.5 83.5L321 91.5L317 92Z" fill="#F6D02E" stroke="#3A3A3A" stroke-width="1"/>
<rect x="314" y="92" width="14" height="4" fill="#E2B048"/>
<rect x="314" y="95" width="14" height="1" fill="#B48A30"/>
<!-- align -->
<g fill="#1E3050" shape-rendering="crispEdges">
<rect x="346" y="80" width="15" height="1"/><rect x="346" y="82" width="12" height="1"/><rect x="346" y="84" width="15" height="1"/><rect x="346" y="86" width="12" height="1"/><rect x="346" y="88" width="15" height="1"/><rect x="346" y="90" width="13" height="1"/><rect x="346" y="92" width="15" height="1"/><rect x="346" y="94" width="13" height="1"/>
<rect x="369" y="80" width="15" height="1"/><rect x="371" y="82" width="11" height="1"/><rect x="369" y="84" width="15" height="1"/><rect x="371" y="86" width="11" height="1"/><rect x="369" y="88" width="15" height="1"/><rect x="371" y="90" width="11" height="1"/><rect x="369" y="92" width="15" height="1"/><rect x="371" y="94" width="11" height="1"/>
<rect x="393" y="80" width="15" height="1"/><rect x="396" y="82" width="12" height="1"/><rect x="393" y="84" width="15" height="1"/><rect x="396" y="86" width="12" height="1"/><rect x="393" y="88" width="15" height="1"/><rect x="395" y="90" width="13" height="1"/><rect x="393" y="92" width="15" height="1"/><rect x="395" y="94" width="13" height="1"/>
<rect x="417" y="80" width="15" height="1"/><rect x="417" y="82" width="15" height="1"/><rect x="417" y="84" width="15" height="1"/><rect x="417" y="86" width="15" height="1"/><rect x="417" y="88" width="15" height="1"/><rect x="417" y="90" width="15" height="1"/><rect x="417" y="92" width="15" height="1"/><rect x="417" y="94" width="15" height="1"/>
<!-- bullets -->
<rect x="454" y="82" width="10" height="1"/><rect x="454" y="87" width="10" height="1"/><rect x="454" y="92" width="10" height="1"/>
<rect x="478" y="82" width="10" height="1"/><rect x="478" y="87" width="10" height="1"/><rect x="478" y="92" width="10" height="1"/>
<!-- outdent/indent -->
<rect x="505" y="81" width="15" height="1"/><rect x="512" y="83" width="8" height="2"/><rect x="512" y="86" width="8" height="2"/><rect x="512" y="89" width="8" height="2"/><rect x="505" y="92" width="15" height="1"/><rect x="505" y="94" width="10" height="1"/>
<rect x="529" y="81" width="15" height="1"/><rect x="536" y="83" width="8" height="2"/><rect x="536" y="86" width="8" height="2"/><rect x="536" y="89" width="8" height="2"/><rect x="529" y="92" width="15" height="1"/><rect x="529" y="94" width="10" height="1"/>
<!-- para bg -->
<rect x="562" y="81" width="12" height="1"/><rect x="565" y="83" width="9" height="1"/><rect x="562" y="85" width="12" height="1"/><rect x="562" y="87" width="12" height="1"/><rect x="562" y="89" width="6" height="1"/>
</g>
<g fill="#2A62C4" shape-rendering="crispEdges">
<rect x="450" y="81" width="3" height="3"/><rect x="450" y="86" width="3" height="3"/><rect x="450" y="91" width="3" height="3"/>
</g>
<g font-family="Liberation Sans" font-size="6" font-weight="bold" fill="#2A62C4">
<text x="473.5" y="85">1</text><text x="473.5" y="90">2</text><text x="473.5" y="95">3</text>
</g>
<path d="M505.5 87L509.5 84V90Z" fill="#4CA22A"/><rect x="508" y="86" width="3" height="2" fill="#4CA22A"/>
<path d="M534.5 87L530.5 84V90Z" fill="#4CA22A"/><rect x="529" y="86" width="3" height="2" fill="#4CA22A"/>
<rect x="562" y="91" width="14" height="4" fill="#E2461A"/>
<!-- style icon in Normal combo -->
<g fill="#3A4A64" shape-rendering="crispEdges">
<rect x="30" y="108" width="10" height="1"/><rect x="28" y="110" width="12" height="1"/><rect x="28" y="112" width="12" height="1"/><rect x="28" y="114" width="12" height="1"/><rect x="28" y="116" width="7" height="1"/>
</g>
<!-- combo chevrons -->
<g stroke="#464646" stroke-width="1.9" fill="none">
<path d="M240.6 111.8L243.9 115.4L247.2 111.8"/>
<path d="M386.6 111.8L389.9 115.4L393.2 111.8"/>
<path d="M447.6 111.8L450.9 115.4L454.2 111.8"/>
</g>
<!-- red ellipses -->
<ellipse cx="412.7" cy="113.7" rx="25.5" ry="15" fill="none" stroke="#E81A1A" stroke-width="1.1"/>
<ellipse cx="489.7" cy="326" rx="29.5" ry="13" fill="none" stroke="#E81A1A" stroke-width="1.1"/>
<!-- inspector close -->
<path d="M571.5 202L576 206.5M576 202L571.5 206.5" stroke="#FFFFFF" stroke-width="1.4"/>
<!-- scrollbar chevrons -->
<path d="M606.3 164L609.5 160.7L612.7 164" stroke="#A6A6A6" stroke-width="2.4" fill="none"/>
<path d="M606.3 370L609.5 373.3L612.7 370" stroke="#A6A6A6" stroke-width="2.4" fill="none"/>
<!-- ruler markers -->
<path d="M16.5 128.5H24.5V130.5L20.5 136L16.5 130.5Z" fill="#F2F2F2" stroke="#8C8C8C"/>
<path d="M20.5 136.5L24.5 141V150.5H16.5V141Z" fill="#F2F2F2" stroke="#8C8C8C"/>
<path d="M16.5 144.5H24.5" stroke="#8C8C8C"/>
<path d="M591.5 137L595.5 141.5V144.5H587.5V141.5Z" fill="#F2F2F2" stroke="#8C8C8C"/>
<!-- para icon in inspector -->
<g fill="#34445E" shape-rendering="crispEdges">
<rect x="414" y="233" width="7" height="1"/><rect x="409" y="235" width="12" height="1"/><rect x="409" y="237" width="12" height="1"/><rect x="409" y="239" width="4" height="1"/><rect x="409" y="241" width="4" height="1"/>
</g>
<g shape-rendering="crispEdges">
<rect x="413" y="239" width="10" height="8" fill="#3E5478"/><rect x="414" y="241" width="8" height="5" fill="#FFFFFF"/><rect x="414" y="240" width="8" height="1" fill="#5A8AD8"/>
<rect x="415" y="242" width="1" height="1" fill="#6A86B0"/><rect x="415" y="244" width="1" height="1" fill="#6A86B0"/><rect x="417" y="242" width="4" height="1" fill="#8AA0C0"/><rect x="417" y="244" width="4" height="1" fill="#8AA0C0"/>
</g>
<!-- font icon in inspector -->
<text x="406.8" y="295.5" font-family="Liberation Serif" font-size="14" fill="#22324E">A</text>
<g shape-rendering="crispEdges">
<rect x="413" y="291" width="10" height="8" fill="#3E5478"/><rect x="414" y="293" width="8" height="5" fill="#FFFFFF"/><rect x="414" y="292" width="8" height="1" fill="#5A8AD8"/>
<rect x="415" y="294" width="1" height="1" fill="#6A86B0"/><rect x="415" y="296" width="1" height="1" fill="#6A86B0"/><rect x="417" y="294" width="4" height="1" fill="#8AA0C0"/><rect x="417" y="296" width="4" height="1" fill="#8AA0C0"/>
</g>
<!-- text cursor -->
<rect x="136" y="177" width="1" height="18" fill="#000" shape-rendering="crispEdges"/>
<!-- app icon -->
<defs><linearGradient id="ig" x1="0" y1="0" x2="0" y2="1"><stop offset="0" stop-color="#8CC4EE"/><stop offset="0.5" stop-color="#4A8ACB"/><stop offset="1" stop-color="#2A66A8"/></linearGradient></defs>
<rect x="10.5" y="7.5" width="15" height="15" rx="3" fill="url(#ig)" stroke="#2A5580"/>
<rect x="11.5" y="8.5" width="13" height="13" rx="2" fill="none" stroke="#A8D4F4" stroke-width="0.7" opacity="0.8"/>
<path d="M12.8 13.8H23.2" stroke="#FFB820" stroke-width="1.6"/>
<path d="M18 13.5L15 10.5M18 13.5V9.5M18 13.5L21 10.5" stroke="#FFD24A" stroke-width="1.3"/>
<path d="M18 13.5V18.8Q18 20.6 19.8 20.6H21.8" stroke="#F79A1A" stroke-width="1.7" fill="none"/>
<!-- caption buttons -->
<rect x="532" y="13" width="8" height="2" fill="#1A1A1A" shape-rendering="crispEdges"/>
<rect x="558" y="7" width="10" height="8" fill="none" stroke="#1A1A1A" stroke-width="1" shape-rendering="crispEdges" transform="translate(0.5 0.5)"/>
<rect x="558" y="7" width="10" height="2" fill="#1A1A1A" shape-rendering="crispEdges"/>
<rect x="576" y="1" width="45" height="20" fill="#C75050" shape-rendering="crispEdges"/>
<path d="M594.5 7L603.5 15M603.5 7L594.5 15" stroke="#FFFFFF" stroke-width="1.7"/>
</svg>
<div class="t" id="title" style="left:194px;top:8px;font-size:15px;letter-spacing:-0.15px;color:#2A2A2A">Untitled.rvf (*) - RichViewActionsTest</div>
<div class="menu" style="left:15px;top:35px"><u>F</u>ile</div>
<div class="menu" style="left:47px;top:35px"><u>E</u>dit</div>
<div class="menu" style="left:81px;top:35px;letter-spacing:0.25px">Fo<u>n</u>t</div>
<div class="menu" style="left:118px;top:35px;letter-spacing:-0.1px"><u>P</u>aragraph</div>
<div class="menu" style="left:186px;top:35px;letter-spacing:0.15px">F<u>o</u>rmat</div>
<div class="menu" style="left:239px;top:35px"><u>I</u>nsert</div>
<div class="menu" style="left:282px;top:35px"><u>T</u>able</div>
<div class="menu" style="left:325px;top:35px"><u>H</u>elp</div>
<div class="t" style="left:43px;top:108px;font-size:11px;letter-spacing:-0.25px;color:#000">Normal</div>
<div class="t" style="left:255px;top:107px;font-size:11px;color:#000">Arial</div>
<div class="t" style="left:400px;top:107px;font-size:11px;letter-spacing:0.2px;color:#000">10.5</div>
<div class="t" style="left:505px;top:107px;font-size:12px;letter-spacing:0.15px;color:#000">Units:</div>
<div class="t" style="left:542px;top:107px;font-size:11px;color:#000">pixels</div>
<div class="t" style="left:21px;top:165px;font-size:13.33px;font-weight:bold;letter-spacing:-0.05px">Text size: 10.0 pt</div>
<div class="t" style="left:21px;top:180px;font-size:14px;font-weight:bold;letter-spacing:0.2px">Text size: 10.5 pt</div>
<div class="t" style="left:21px;top:196px;font-size:15px;font-weight:bold;letter-spacing:0.02px">Text size: 11.0 pt</div>
<div class="t" style="left:440px;top:198px;font-size:14.75px;color:#1A1A1A">Style Inspector</div>
<div class="t" style="left:428px;top:234px;font-size:13.75px;font-weight:bold">Paragraph</div>
<div class="t" style="left:428px;top:286px;font-size:13.75px;font-weight:bold">Font</div>
<div class="t" style="left:403px;top:255px;font-size:10.5px;letter-spacing:0.5px"><b class="ib">Style: </b><b class="ib"><i>Normal</i></b></div>
<div class="t" style="left:403px;top:268px;font-size:10.5px;letter-spacing:0.5px"><b class="ib">Attributes: </b>inherited</div>
<div class="t" style="left:403px;top:307px;font-size:10.5px;letter-spacing:0.5px"><b class="ib">Style: </b>(None)</div>
<div class="t" style="left:403px;top:320px;font-size:10.5px;letter-spacing:0.5px"><b class="ib">Attributes: </b>+ 10.5 pt, bold</div>
<div class="t" style="left:523px;top:388px;font-size:8.5px;font-weight:bold;color:#000;transform:scaleX(0.85);transform-origin:0 0">Skin</div>
<div class="a" style="left:558px;top:387px;width:47px;height:10px;overflow:hidden"><div class="t" style="left:6px;top:1px;font-size:8.5px;font-weight:bold;color:#000;transform:scaleX(0.86);transform-origin:0 0">Language</div></div>

</body></html>
